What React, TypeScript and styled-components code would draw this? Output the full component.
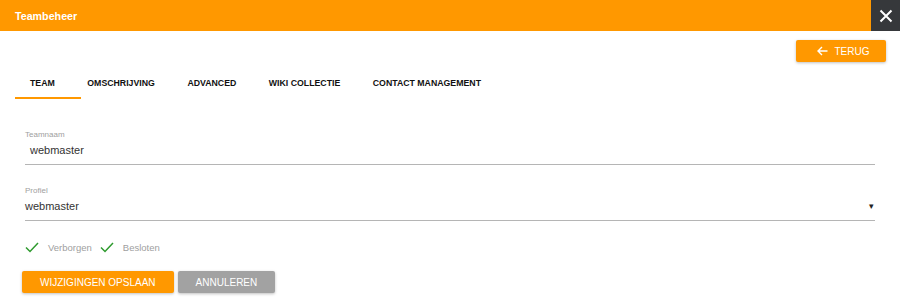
import React, { useState } from "react";
import styled, { createGlobalStyle } from "styled-components";

const GlobalStyle = createGlobalStyle`
  body {
    margin: 0;
    background: #fff;
    font-family: "Liberation Sans", Arial, sans-serif;
  }
`;

const tabs = ["Team", "Omschrijving", "Advanced", "Wiki collectie", "Contact management"];

export default function App() {
  const [active, setActive] = useState<number>(0);

  return (
    <>
      <GlobalStyle />
      <StyledPage>
        <StyledHeader>
          <StyledTitle>Teambeheer</StyledTitle>
          <StyledClose aria-label="close">
            <svg width="14" height="14" viewBox="0 0 14 14">
              <path d="M1.5 1.5 L12.5 12.5 M12.5 1.5 L1.5 12.5" stroke="#fff" strokeWidth="2" />
            </svg>
          </StyledClose>
        </StyledHeader>

        <StyledTopBar>
          <StyledBackButton>
            <svg width="11" height="10" viewBox="0 0 11 10">
              <path d="M10.5 5 H1.5 M5 1 L1 5 L5 9" stroke="#fff" strokeWidth="1.4" fill="none" />
            </svg>
            Terug
          </StyledBackButton>
        </StyledTopBar>

        <StyledTabs>
          {tabs.map((t, idx) => (
            <StyledTab key={t} $active={idx === active} onClick={() => setActive(idx)}>
              {t}
            </StyledTab>
          ))}
        </StyledTabs>

        <StyledForm>
          <StyledField>
            <StyledLabel>Teamnaam</StyledLabel>
            <StyledValue $indent>webmaster</StyledValue>
          </StyledField>
          <StyledField>
            <StyledLabel>Profiel</StyledLabel>
            <StyledValue>
              webmaster
              <StyledCaret>▾</StyledCaret>
            </StyledValue>
          </StyledField>

          <StyledChecks>
            {["Verborgen", "Besloten"].map((c) => (
              <StyledCheck key={c}>
                <svg width="14" height="11" viewBox="0 0 14 11">
                  <path d="M1 5.5 L5 9.5 L13 1" stroke="#2e9a2e" strokeWidth="1.5" fill="none" />
                </svg>
                {c}
              </StyledCheck>
            ))}
          </StyledChecks>

          <StyledActions>
            <StyledButton $variant="primary">Wijzigingen opslaan</StyledButton>
            <StyledButton $variant="secondary">Annuleren</StyledButton>
          </StyledActions>
        </StyledForm>
      </StyledPage>
    </>
  );
}

// style
const StyledPage = styled.div`
  width: 900px;
  height: 307px;
  overflow: hidden;
`;

const StyledHeader = styled.header`
  display: flex;
  align-items: center;
  justify-content: space-between;
  height: 31px;
  background: #ff9800;
`;

const StyledTitle = styled.h1`
  margin: 0 0 0 15px;
  font-size: 10.7px;
  font-weight: 700;
  color: #fff;
`;

const StyledClose = styled.button`
  display: flex;
  align-items: center;
  justify-content: center;
  width: 29px;
  height: 31px;
  border: none;
  padding: 0;
  background: #36383b;
  cursor: pointer;
`;

const StyledTopBar = styled.div`
  display: flex;
  justify-content: flex-end;
  padding: 9px 14px 0 0;
`;

const StyledBackButton = styled.button`
  display: flex;
  align-items: center;
  justify-content: center;
  gap: 7px;
  width: 90px;
  height: 22px;
  border: none;
  border-radius: 2px;
  background: #ff9800;
  color: #fff;
  font-family: inherit;
  font-size: 10px;
  font-weight: 400;
  text-transform: uppercase;
  box-shadow: 0 1px 3px rgba(0, 0, 0, 0.25);
  padding: 0 0 0 4px;
`;

const StyledTabs = styled.nav`
  display: flex;
  margin: 9px 0 0 14px;
`;

const StyledTab = styled.div<{ $active: boolean }>`
  position: relative;
  padding: 7px 16.5px 11px 16px;
  font-size: 8.75px;
  font-weight: 700;
  color: #111;
  text-transform: uppercase;
  cursor: pointer;

  &::after {
    content: "";
    display: ${(p) => (p.$active ? "block" : "none")};
    position: absolute;
    left: 1px;
    bottom: 0;
    width: 66px;
    height: 2px;
    background: #ff9800;
  }
`;

const StyledForm = styled.section`
  padding: 31px 25px 0 25px;
`;

const StyledField = styled.div`
  width: 850px;
  border-bottom: 1px solid #b5b5b5;
  margin-bottom: 21px;
`;

const StyledLabel = styled.div`
  font-size: 8px;
  color: #a0a0a0;
  line-height: 10px;
`;

const StyledValue = styled.div<{ $indent?: boolean }>`
  display: flex;
  justify-content: space-between;
  align-items: center;
  padding: 4px 0 8px ${(p) => (p.$indent ? "5px" : "0")};
  font-size: 11px;
  color: #333;
`;

const StyledCaret = styled.span`
  font-size: 9px;
  color: #222;
  margin-right: 1px;
`;

const StyledChecks = styled.div`
  display: flex;
  gap: 8px;
  margin-top: 5px;
`;

const StyledCheck = styled.label`
  display: flex;
  align-items: center;
  gap: 9px;
  font-size: 9.5px;
  color: #a0a0a0;
`;

const StyledActions = styled.div`
  display: flex;
  gap: 4px;
  margin: 18px 0 0 -3px;
`;

const StyledButton = styled.button<{ $variant: "primary" | "secondary" }>`
  height: 22px;
  padding: 0 18px;
  border: none;
  border-radius: 2px;
  background: ${(p) => (p.$variant === "primary" ? "#ff9800" : "#a2a2a2")};
  color: #fff;
  font-family: inherit;
  font-size: 10px;
  font-weight: 400;
  text-transform: uppercase;
  box-shadow: 0 1px 3px rgba(0, 0, 0, 0.25);
`;
